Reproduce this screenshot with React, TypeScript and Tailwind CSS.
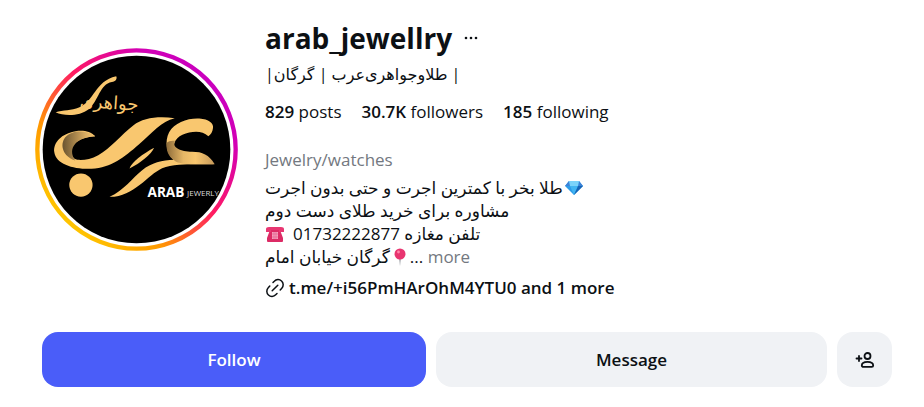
const stats = [
  { value: "829", label: "posts" },
  { value: "30.7K", label: "followers" },
  { value: "185", label: "following" },
];

const Avatar = () => {
  return (
    <svg viewBox="28 24 610 610" className="w-full" role="img" aria-label="Arab Jewerly">
      <defs>
        <linearGradient id="ring" x1="0.1" y1="0.85" x2="0.85" y2="0.1">
          <stop offset="0" stopColor="#ffc800" />
          <stop offset="0.25" stopColor="#ff9a00" />
          <stop offset="0.55" stopColor="#ff1a63" />
          <stop offset="0.85" stopColor="#d300b4" />
          <stop offset="1" stopColor="#c800c0" />
        </linearGradient>
        <linearGradient id="foldLeft" x1="0" y1="0" x2="1" y2="0">
          <stop offset="0" stopColor="#6b5430" />
          <stop offset="0.7" stopColor="#d9ac62" />
          <stop offset="1" stopColor="#f9c76f" />
        </linearGradient>
        <linearGradient id="foldRight" x1="0" y1="0" x2="1" y2="0">
          <stop offset="0" stopColor="#8f6d3b" />
          <stop offset="0.35" stopColor="#e6b766" />
          <stop offset="0.6" stopColor="#f9c76f" />
          <stop offset="1" stopColor="#c4985a" />
        </linearGradient>
        <clipPath id="face">
          <circle cx="333" cy="329" r="282" />
        </clipPath>
      </defs>
      <circle cx="333" cy="329" r="298" fill="#fff" stroke="url(#ring)" strokeWidth="13" />
      <circle cx="333" cy="329" r="282" />
      <g clipPath="url(#face)">
        <g fill="#f9c76f">
          <path d="M209 289C195 274 172 270 150 274C108 281 82 308 86 337C91 373 145 389 198 387C258 384 296 352 340 314C382 278 407 244 448 235C398 228 352 234 324 256C284 287 256 325 218 346C190 361 160 364 147 357C126 338 134 294 209 289Z" />
          <circle cx="166" cy="436" r="35" />
          <path d="M312 386C318 368 352 342 386 324C378 343 344 371 312 386Z" />
          <path d="M252 471C295 452 322 413 350 391C378 370 410 360 446 360L568 373C510 374 447 370 410 385C366 405 325 472 252 471Z" />
          <path d="M446 362C422 340 417 305 431 277C447 248 488 234 522 236C550 238 565 250 563 264C562 276 556 285 549 289C529 270 498 273 471 285C447 296 438 318 446 362Z" />
        </g>
        <path d="M209 289C184 269 138 270 119 292C101 315 112 350 149 362C123 324 154 291 209 289Z" fill="url(#foldLeft)" />
        <path d="M424 309C421 333 430 352 446 361C462 377 520 373 568 373C550 345 532 336 500 336C466 336 438 324 449 303C439 301 429 304 424 309Z" fill="url(#foldRight)" />
        <path
          d="M90 217C112 211 138 212 160 203C207 184 207 124 272 109C276 116 270 126 259 126C222 133 220 181 190 207C162 230 115 229 90 217Z"
          fill="#f9c76f"
        />
        <text
          x="338"
          y="213"
          direction="rtl"
          transform="rotate(4 338 213)"
          fontSize="54"
          fill="#f9c76f"
          className="font-['DejaVu_Sans',sans-serif]"
        >
          جواهری
        </text>
        <text x="366" y="471" fontSize="41" fill="#fff" className="font-['Open_Sans',sans-serif] font-bold">
          ARAB
        </text>
        <text x="485" y="470" fontSize="24" fill="#ddd" className="font-['Open_Sans',sans-serif]">
          JEWERLY
        </text>
      </g>
    </svg>
  );
};

const Gem = () => (
  <svg viewBox="0 0 18 16" className="h-4 w-[18px] shrink-0" aria-hidden="true">
    <path d="M4 1h10l4 5-9 9-9-9z" fill="#2d9be8" />
    <path d="M4 1 0 6h5zM14 1l4 5h-5z" fill="#3d83d8" />
    <path d="M4 1h10l-1 5H5z" fill="#7bd3fa" />
    <path d="m5 6 4 9 4-9z" fill="#42b5f2" />
    <path d="m13 6-4 9 9-9z" fill="#1764b5" />
  </svg>
);

const Phone = () => (
  <svg viewBox="0 0 20 16" className="h-4 w-5 shrink-0" aria-hidden="true">
    <path d="M5 4h10l3 8v3q0 1-1 1H3q-1 0-1-1v-3z" fill="#dc2b65" />
    <path d="M1 6V3q0-2 3-2h12q3 0 3 2v3h-5V4H6v2z" fill="#e83772" />
    <path d="M7 6h6v7H7z" fill="#f5a0bd" />
    <path d="M7 8h6M7 11h6M9 6v7M11 6v7" stroke="#df5b89" strokeWidth=".6" />
  </svg>
);

const Pin = () => (
  <svg viewBox="0 0 12 18" className="h-[18px] w-3 shrink-0" aria-hidden="true">
    <path d="M5 9h2l-1 9z" fill="#9a9da3" />
    <circle cx="6" cy="6" r="5.500" fill="#e83570" />
    <circle cx="4.5" cy="4" r="1.4" fill="#ff86aa" />
  </svg>
);

const LinkIcon = () => (
  <svg viewBox="0 0 20 20" className="size-5 shrink-0" fill="none" stroke="#0c1014" strokeWidth="1.5" strokeLinecap="round" aria-hidden="true">
    <path d="m7.2 12.8 5.6-5.6" />
    <path d="m8 4.500 1.300-1.300a4.9 4.9 0 0 1 7.500 7L15.2 12" />
    <path d="m12 15.500-1.300 1.300a4.9 4.9 0 0 1-7.500-7L4.8 8" />
  </svg>
);

const AddPersonIcon = () => (
  <svg viewBox="0 0 20 18" className="h-[18px] w-5" fill="none" stroke="#0c1014" strokeWidth="1.8" strokeLinecap="round" strokeLinejoin="round" aria-hidden="true">
    <path d="M1.5 7.5h5M4 5v5" />
    <circle cx="12.5" cy="5" r="3" />
    <path d="M6.8 14.500c0-2.300 2-3.700 5.700-3.700s5.700 1.400 5.700 3.700c0 .9-.7 1.300-1.500 1.300H8.300c-.8 0-1.500-.4-1.500-1.300Z" />
  </svg>
);

const App = () => {
  return (
    <main className="min-h-screen bg-white pt-5 pb-5 font-['Open_Sans','DejaVu_Sans',sans-serif] text-[17px] text-[#0c1014]">
      <section className="flex gap-[27px] pl-[35px] pr-8">
        <div className="w-[203px] shrink-0 pt-7">
          <Avatar />
        </div>
        <div className="min-w-0 flex-1">
          <div className="flex items-center gap-3">
            <h1 className="text-[28px] leading-9 font-bold">arab_jewellry</h1>
            <button type="button" aria-label="Options">
              <svg viewBox="0 0 14 4" className="h-1 w-3.5" fill="#0c1014">
                <circle cx="2" cy="2" r="1.3" />
                <circle cx="7" cy="2" r="1.3" />
                <circle cx="12" cy="2" r="1.3" />
              </svg>
            </button>
          </div>
          <p dir="rtl" className="mt-1 text-left text-base leading-7">
            | طلاوجواهری‌عرب | گرگان|
          </p>
          <ul className="mt-3 flex gap-5 leading-6">
            {stats.map((stat) => (
              <li key={stat.label}>
                <span className="font-semibold">{stat.value}</span> {stat.label}
              </li>
            ))}
          </ul>
          <p className="mt-6 leading-6 text-[#737880]">Jewelry/watches</p>
          <div className="mt-1 leading-[23px]">
            <div dir="rtl" className="flex items-center justify-end gap-0.5">
              <Gem />
              <span>طلا بخر با کمترین اجرت و حتی بدون اجرت</span>
            </div>
            <p dir="rtl" className="text-left">
              مشاوره برای خرید طلای دست دوم
            </p>
            <div dir="rtl" className="flex items-center justify-end gap-2">
              <span>تلفن مغازه 01732222877</span>
              <Phone />
            </div>
            <div className="flex items-center gap-1">
              <span dir="rtl">گرگان خیابان امام</span>
              <Pin />
              <span>
                ... <button type="button" className="text-[#737880]">more</button>
              </span>
            </div>
          </div>
          <a href="#links" className="mt-2 flex items-center gap-1 leading-6 font-semibold">
            <LinkIcon />
            t.me/+i56PmHArOhM4YTU0 and 1 more
          </a>
        </div>
      </section>
      <div className="mt-8 grid grid-cols-[384fr_391fr_55px] gap-2.5 pr-8 pl-[42px] font-semibold">
        <button type="button" className="h-[55px] rounded-2xl bg-[#4a5df9] text-white">
          Follow
        </button>
        <button type="button" className="h-[55px] rounded-2xl bg-[#f0f2f5]">
          Message
        </button>
        <button type="button" aria-label="Similar accounts" className="flex h-[55px] items-center justify-center rounded-2xl bg-[#f0f2f5]">
          <AddPersonIcon />
        </button>
      </div>
    </main>
  );
};

export default App;
